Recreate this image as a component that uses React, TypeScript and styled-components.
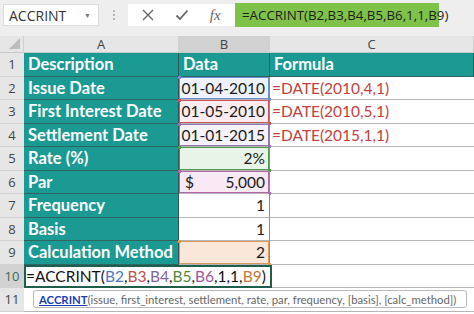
import React from "react";
import styled, { createGlobalStyle } from "styled-components";

const GlobalStyle = createGlobalStyle`
  html, body {
    margin: 0;
    padding: 0;
    background: #ffffff;
    overflow: hidden;
  }
  body {
    font-family: "Lato", "Liberation Sans", sans-serif;
  }
`;

const Window = styled.div`
  width: 474px;
  height: 314px;
  display: flex;
  flex-direction: column;
  background: #ffffff;
  overflow: hidden;
`;

const Toolbar = styled.div`
  height: 36px;
  flex: none;
  box-sizing: border-box;
  background: #eeeeee;
  display: flex;
  align-items: flex-start;
  padding: 3px 0 0 3px;
`;

const NameBox = styled.div`
  width: 96px;
  height: 22px;
  margin-top: 1px;
  box-sizing: border-box;
  background: #ffffff;
  border: 1px solid #dcdcdc;
  display: flex;
  align-items: center;
  justify-content: space-between;
  padding: 0 7px 0 5px;
  font-family: "Open Sans", "Noto Sans", sans-serif;
  font-size: 14px;
  color: #333333;
`;

const Caret = styled.span`
  font-size: 7px;
  color: #777777;
`;

const Grip = styled.div`
  width: 29px;
  height: 24px;
  display: flex;
  flex-direction: column;
  align-items: center;
  justify-content: center;
  gap: 2px;

  span {
    width: 2px;
    height: 2px;
    background: #b5b5b5;
  }
`;

const ActionBox = styled.div`
  width: 107px;
  height: 22px;
  margin-top: 1px;
  background: #ffffff;
  display: flex;
  align-items: center;
  justify-content: space-around;
  padding: 0 4px;
  box-sizing: border-box;
  color: #666666;
`;

const Fx = styled.span`
  font-family: "Liberation Serif", serif;
  font-style: italic;
  font-size: 15px;
  color: #666666;
`;

const FormulaBar = styled.div`
  width: 204px;
  height: 24px;
  background: #7ec24a;
  display: flex;
  align-items: center;
  padding-left: 7px;
  box-sizing: border-box;
  font-family: "Open Sans", "Noto Sans", sans-serif;
  font-size: 13.3px;
  color: #1d1d1d;
`;

const Sheet = styled.div`
  position: relative;
  display: grid;
  grid-template-columns: 24px 155px 91px 1fr;
  grid-template-rows: 17px repeat(11, 23.5px);
`;

const Corner = styled.div`
  background: #e6e6e6;
  border-right: 1px solid #d0d0d0;
  border-bottom: 1px solid #c8c8c8;
  position: relative;

  &::after {
    content: "";
    position: absolute;
    right: 3px;
    bottom: 3px;
    border-style: solid;
    border-width: 0 0 11px 11px;
    border-color: transparent transparent #bcbcbc transparent;
  }
`;

const ColHead = styled.div<{ $active?: boolean }>`
  background: ${(p) => (p.$active ? "#d2d2d2" : "#e6e6e6")};
  border-right: 1px solid #d0d0d0;
  border-bottom: 1px solid #c8c8c8;
  display: flex;
  align-items: center;
  justify-content: center;
  font-family: "Open Sans", "Noto Sans", sans-serif;
  font-size: 13px;
  color: #444444;
`;

const RowHead = styled.div<{ $active?: boolean }>`
  background: ${(p) => (p.$active ? "#d2d2d2" : "#e6e6e6")};
  border-bottom: 1px solid #d2d2d2;
  display: flex;
  align-items: center;
  justify-content: center;
  font-family: "Open Sans", "Noto Sans", sans-serif;
  font-size: 13px;
  color: ${(p) => (p.$active ? "#3d6b4f" : "#444444")};
`;

const Label = styled.div`
  background: #1b9a94;
  border-right: 1px solid #2b5857;
  border-bottom: 1px solid #2f6462;
  display: flex;
  align-items: center;
  padding-left: 4px;
  font-weight: 700;
  font-size: 16.5px;
  color: #ffffff;
  white-space: nowrap;
  overflow: hidden;
`;

const Value = styled.div<{ $tint?: string; $edge?: string; $split?: boolean }>`
  position: relative;
  background: ${(p) => p.$tint || "#ffffff"};
  border-right: 1px solid #8c8c8c;
  border-bottom: 1px solid #b5b5b5;
  box-shadow: ${(p) => (p.$edge ? `inset 0 0 0 1px ${p.$edge}` : "none")};
  display: flex;
  align-items: center;
  justify-content: ${(p) => (p.$split ? "space-between" : "flex-end")};
  padding: 0 4px 0 6px;
  font-size: 15.5px;
  color: #1a1a1a;
  white-space: nowrap;

  &::before,
  &::after {
    content: ${(p) => (p.$edge ? '""' : "none")};
    position: absolute;
    width: 3px;
    height: 3px;
    background: ${(p) => p.$edge || "transparent"};
  }
  &::before {
    left: -1px;
    top: -1px;
  }
  &::after {
    right: -2px;
    bottom: -2px;
  }
`;

const Formula = styled.div`
  border-bottom: 1px solid #b5b5b5;
  display: flex;
  align-items: center;
  padding-left: 2px;
  font-size: 15.5px;
  color: #c0413f;
  white-space: nowrap;
`;

const Blank = styled.div`
  border-bottom: 1px solid #b5b5b5;
`;

const Editing = styled.div`
  grid-column: 2 / 4;
  box-sizing: border-box;
  margin-right: -2px;
  border: 2px solid #1f5e4a;
  display: flex;
  align-items: center;
  padding-left: 0;
  font-size: 15.5px;
  color: #111111;
  white-space: nowrap;
  background: #ffffff;
  position: relative;
`;

const Ref = styled.span<{ $c: string }>`
  color: ${(p) => p.$c};
`;

const Hint = styled.div`
  position: absolute;
  left: 33px;
  top: 254px;
  width: 434px;
  height: 18px;
  box-sizing: border-box;
  background: #ffffff;
  border: 1px solid #b9b9b9;
  border-radius: 3px;
  display: flex;
  align-items: center;
  padding-left: 5px;
  font-family: "Lato", "Liberation Sans", sans-serif;
  font-size: 11.3px;
  color: #666666;
  white-space: nowrap;
  overflow: hidden;
`;

const HintName = styled.span`
  color: #1b3fb0;
  font-weight: 700;
  text-decoration: underline;
`;

type Row = {
  label: string;
  value?: string;
  tint?: string;
  edge?: string;
  formula?: string;
  money?: boolean;
};

const rows: Row[] = [
  { label: "Issue Date", value: "01-04-2010", tint: "#eef3fb", edge: "#6b8fd0", formula: "=DATE(2010,4,1)" },
  { label: "First Interest Date", value: "01-05-2010", tint: "#fcecef", edge: "#c9545a", formula: "=DATE(2010,5,1)" },
  { label: "Settlement Date", value: "01-01-2015", tint: "#f7f2fa", edge: "#9274b4", formula: "=DATE(2015,1,1)" },
  { label: "Rate (%)", value: "2%", tint: "#e9f4e9", edge: "#4e9a4a" },
  { label: "Par", value: "5,000", tint: "#f8e9f4", edge: "#b167a7", money: true },
  { label: "Frequency", value: "1" },
  { label: "Basis", value: "1" },
  { label: "Calculation Method", value: "2", tint: "#fbe6da", edge: "#d99a5c" },
];

function App() {
  return (
    <Window>
      <GlobalStyle />
      <Toolbar>
        <NameBox>
          ACCRINT
          <Caret>▼</Caret>
        </NameBox>
        <Grip>
          <span />
          <span />
          <span />
        </Grip>
        <ActionBox>
          <svg width="12" height="12" viewBox="0 0 12 12">
            <path d="M1 1 L11 11 M11 1 L1 11" stroke="#666" strokeWidth="1.4" />
          </svg>
          <svg width="14" height="12" viewBox="0 0 14 12">
            <path d="M1.5 6.5 L5 10 L12.5 1.5" stroke="#666" strokeWidth="1.8" fill="none" />
          </svg>
          <Fx>fx</Fx>
        </ActionBox>
        <FormulaBar>=ACCRINT(B2,B3,B4,B5,B6,1,1,B9)</FormulaBar>
      </Toolbar>

      <Sheet>
        <Corner />
        <ColHead>A</ColHead>
        <ColHead $active>B</ColHead>
        <ColHead>C</ColHead>

        <RowHead>1</RowHead>
        <Label>Description</Label>
        <Label>Data</Label>
        <Label>Formula</Label>

        {rows.map((r, i) => (
          <React.Fragment key={r.label}>
            <RowHead>{i + 2}</RowHead>
            <Label>{r.label}</Label>
            <Value $tint={r.tint} $edge={r.edge} $split={r.money}>
              {r.money && <span>$</span>}
              <span>{r.value}</span>
            </Value>
            {r.formula ? <Formula>{r.formula}</Formula> : <Blank />}
          </React.Fragment>
        ))}

        <RowHead $active>10</RowHead>
        <Editing>
          =ACCRINT(<Ref $c="#4a78c4">B2</Ref>,<Ref $c="#c0504d">B3</Ref>,
          <Ref $c="#8064a2">B4</Ref>,<Ref $c="#4f8a3e">B5</Ref>,
          <Ref $c="#a1559a">B6</Ref>,1,1,<Ref $c="#c07a36">B9</Ref>)
        </Editing>
        <Blank />

        <RowHead>11</RowHead>
        <Blank />
        <Blank />
        <Blank />

        <Hint>
          <HintName>ACCRINT</HintName>(issue, first_interest, settlement, rate, par, frequency, [basis], [calc_method])
        </Hint>
      </Sheet>
    </Window>
  );
}

export default App;
